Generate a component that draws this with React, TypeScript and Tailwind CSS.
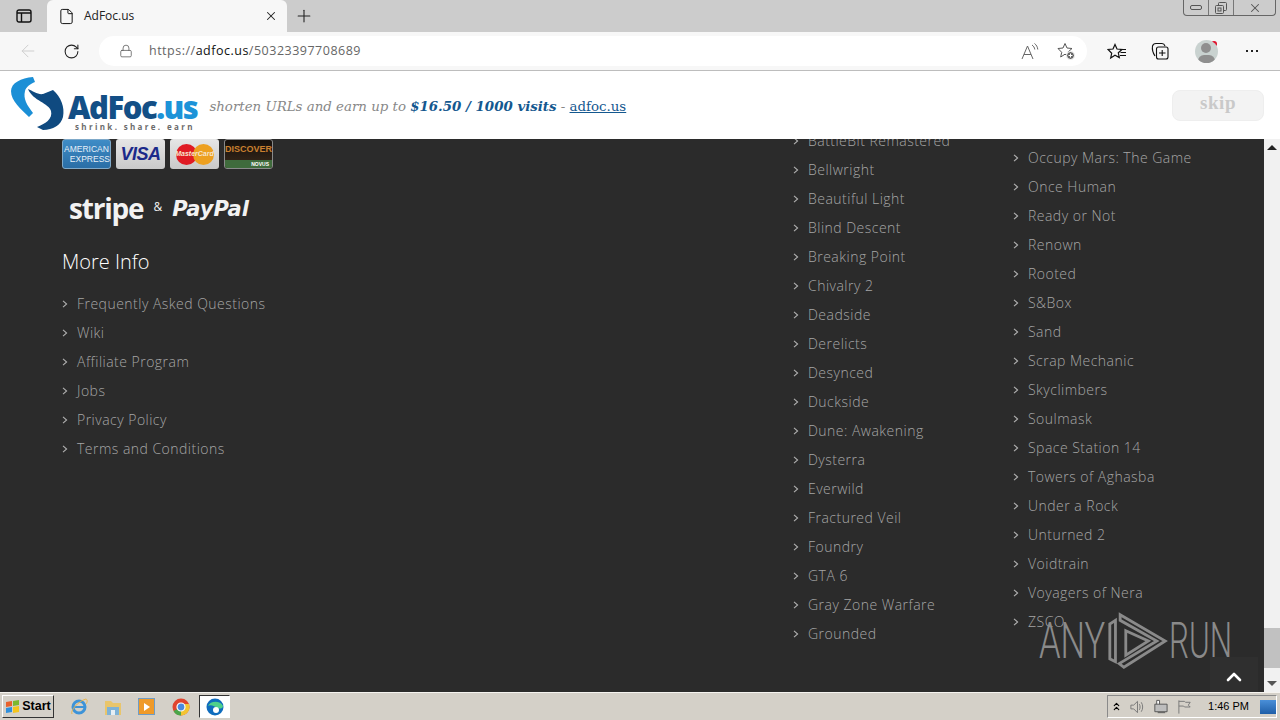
import { ChevronUp, RotateCw, ArrowLeft, Plus, X, Lock, File } from "lucide-react"

const moreInfo = ["Frequently Asked Questions", "Wiki", "Affiliate Program", "Jobs", "Privacy Policy", "Terms and Conditions"]

const gamesA = ["BattleBit Remastered", "Bellwright", "Beautiful Light", "Blind Descent", "Breaking Point", "Chivalry 2", "Deadside", "Derelicts", "Desynced", "Duckside", "Dune: Awakening", "Dysterra", "Everwild", "Fractured Veil", "Foundry", "GTA 6", "Gray Zone Warfare", "Grounded"]

const gamesB = ["Occupy Mars: The Game", "Once Human", "Ready or Not", "Renown", "Rooted", "S&Box", "Sand", "Scrap Mechanic", "Skyclimbers", "Soulmask", "Space Station 14", "Towers of Aghasba", "Under a Rock", "Unturned 2", "Voidtrain", "Voyagers of Nera", "ZSCO"]

function LinkRow({ label }: { label: string }) {
  return (
    <li className="flex h-[29px] items-center text-[14px] font-light tracking-[0.48px] text-[#a6a6a6]">
      <svg width="6" height="8" viewBox="0 0 6 8" fill="none" stroke="#b0b0b0" strokeWidth="1.1" className="mr-[9px] shrink-0">
        <path d="M1 .8L4.6 4 1 7.2" />
      </svg>
      <span className="whitespace-nowrap">{label}</span>
    </li>
  )
}

function TabBar() {
  return (
    <div className="flex h-[32px] shrink-0 bg-[#cccccc]">
      <div className="flex w-[47px] items-center justify-center">
        <svg width="16" height="14" viewBox="0 0 16 14" fill="none" stroke="#111" strokeWidth="1.4">
          <rect x="1" y="1" width="14" height="12" rx="2" />
          <path d="M1 4h14M5.5 4v9" />
        </svg>
      </div>
      <div className="flex w-[240px] items-center rounded-t-[6px] bg-[#f7f7f7] pl-[11px] pr-[9px]">
        <File size={17} strokeWidth={1.4} className="text-[#111]" />
        <span className="ml-[9px] flex-1 font-['Open_Sans',sans-serif] text-[12px] text-[#222]">AdFoc.us</span>
        <X size={14} strokeWidth={1.8} className="text-[#222]" />
      </div>
      <div className="ml-[7px] flex items-center">
        <Plus size={20} strokeWidth={1.3} className="text-[#222]" />
      </div>
      <div className="flex-1" />
      <div className="mr-[4px] flex h-[16px] w-[93px] rounded-b-[4px] border border-t-0 border-[#666]">
        <div className="flex w-[25px] items-center justify-center border-r border-[#777]">
          <div className="h-[5px] w-[12px] rounded-[2px] border border-[#555]" />
        </div>
        <div className="flex w-[25px] items-center justify-center border-r border-[#777]">
          <svg width="12" height="12" viewBox="0 0 12 12" fill="none" stroke="#555">
            <rect x="3.5" y=".5" width="8" height="8" rx="1" />
            <rect x=".5" y="3.5" width="8" height="8" rx="1" fill="#ccc" />
            <rect x="3" y="6" width="3" height="3" />
          </svg>
        </div>
        <div className="flex flex-1 items-center justify-center">
          <X size={14} strokeWidth={1.8} className="text-[#555]" />
        </div>
      </div>
    </div>
  )
}

function Toolbar() {
  return (
    <div className="flex h-[39px] shrink-0 items-center border-b border-[#bdbdbd] bg-[#f7f7f7]">
      <ArrowLeft size={20} strokeWidth={1.2} className="ml-[18px] text-[#cfcfcf]" />
      <RotateCw size={17} strokeWidth={1.5} className="ml-[25px] text-[#222]" />
      <div className="ml-[19px] flex h-[30px] w-[988px] items-center rounded-full bg-white pl-[20px] pr-[12px]">
        <Lock size={14} strokeWidth={1.3} className="text-[#555]" />
        <span className="ml-[16px] flex-1 font-['Open_Sans',sans-serif] text-[12.5px] tracking-[0.5px] text-[#666]">
          https://<span className="text-[#111]">adfoc.us</span>/50323397708689
        </span>
        <svg width="18" height="17" viewBox="0 0 18 17" fill="none" stroke="#666" strokeWidth="1" className="mr-[18px]">
          <path d="M1 16L6.5 3 12 16M3 11.5h7" />
          <path d="M11 2c1.5 1 2.5 2.500 2.800 4.500M13.500 .5c2 1.500 3 3.500 3.300 6" />
        </svg>
        <svg width="18" height="18" viewBox="0 0 18 18" fill="none" stroke="#555" strokeWidth="1">
          <path d="M8 1.500l2 4.500 5 .5-3.700 3.300 1 4.700L8 12.200l-4.300 2.800 1-4.700L1 6.500l5-.5z" />
          <circle cx="13.500" cy="13.500" r="4" fill="#666" stroke="#fff" />
          <path d="M13.500 11.500v4M11.500 13.500h4" stroke="#fff" />
        </svg>
      </div>
      <svg width="20" height="17" viewBox="0 0 20 17" fill="none" stroke="#111" strokeWidth="1.2" className="ml-[20px]">
        <path d="M8 1.500l2 4.500 5 .5-3.700 3.300 1 4.700L8 12.200l-4.300 2.800 1-4.700L1 6.500l5-.5z" />
        <path d="M13 6.500h6M13.500 9.500h5.500M13 12.500h6" />
      </svg>
      <svg width="18" height="18" viewBox="0 0 18 18" fill="none" stroke="#111" strokeWidth="1.1" className="ml-[24px]">
        <path d="M4 14C2 11 1 7 1.500 4 2 2 3 1.500 5 1.500h6c1.500 0 2.500 1 3 2.500" />
        <rect x="5.500" y="5" width="11.500" height="12" rx="2" />
        <path d="M11.200 8v6M8 11h6.500" />
      </svg>
      <div className="relative ml-[26px] h-[23px] w-[23px] overflow-hidden rounded-full bg-[#c9d2d0]">
        <div className="absolute left-[6px] top-[3px] h-[10px] w-[10px] rounded-full bg-[#8f8f8f]" />
        <div className="absolute left-[3px] top-[15px] h-[12px] w-[17px] rounded-full bg-[#8f8f8f]" />
      </div>
      <div className="ml-[-7px] mt-[-14px] h-[6px] w-[6px] rounded-full bg-[#e0102a]" />
      <div className="ml-[29px] flex gap-[3px]">
        <div className="h-[2px] w-[2px] bg-[#222]" />
        <div className="h-[2px] w-[2px] bg-[#222]" />
        <div className="h-[2px] w-[2px] bg-[#222]" />
      </div>
    </div>
  )
}

function Logo() {
  return (
    <div className="flex items-start self-start">
      <svg width="56" height="56" viewBox="0 0 56 56" className="mt-[6px] shrink-0">
        <path d="M22 0C10 1 0 6 0 14c0 10 10 18 18 26l4-4C16 28 12 22 14 14c1-4 5-7 10-9z" fill="#1b8fd6" />
        <path d="M17 12c5 2 10 6 15 5l10-4c8 7 12 17 10 27-2 8-10 13-20 13l-6-3c8-3 16-8 14-16-2-8-18-10-23-22z" fill="#0f4a80" />
      </svg>
      <div className="ml-[1px] mt-[21px] flex flex-col leading-none">
        <span className="font-['Open_Sans',sans-serif] text-[31px] font-extrabold leading-[30px] tracking-[-1.5px] text-[#134f86]">
          AdFoc<span className="text-[#1c93d8]">.us</span>
        </span>
        <span className="ml-[7px] font-['Open_Sans',sans-serif] text-[8px] font-bold leading-[9px] tracking-[2.35px] text-[#6b6b6b]">shrink. share. earn</span>
      </div>
    </div>
  )
}

function Banner() {
  return (
    <div className="flex h-[68px] shrink-0 items-center bg-white pl-[11px] pr-[16px]">
      <Logo />
      <div className="ml-[12px] mt-[3px] flex-1 whitespace-nowrap font-['DejaVu_Serif',serif] text-[13.370px] italic text-[#888]">
        shorten URLs and earn up to <span className="font-bold text-[#14588f]">$16.50 / 1000 visits</span> - <span className="not-italic text-[#14588f] underline">adfoc.us</span>
      </div>
      <div className="flex h-[31px] w-[92px] items-center justify-center rounded-[8px] border border-[#eeeeee] bg-[#f3f3f3] pb-[4px] font-['Liberation_Serif',serif] text-[19px] font-bold tracking-[0.6px] text-[#c9c9c9]">
        skip
      </div>
    </div>
  )
}

function Cards() {
  return (
    <div className="flex gap-[5px]">
      <div className="flex h-[30px] w-[49px] flex-col items-center justify-center rounded-[3px] border border-[#7fa9c9] bg-linear-to-b from-[#3f8cc6] to-[#2a6ea6] font-['Liberation_Sans',sans-serif] text-[8.500px] leading-[10px] text-[#e6f0f8]">
        <span>AMERICAN</span>
        <span className="self-end">EXPRESS</span>
      </div>
      <div className="flex h-[30px] w-[49px] items-center justify-center rounded-[3px] bg-linear-to-b from-[#e6e6e6] to-[#c9c9c9] font-['Liberation_Sans',sans-serif] text-[18px] font-bold italic tracking-[-0.5px] text-[#1b2a8a]">VISA</div>
      <div className="relative flex h-[30px] w-[49px] items-center justify-center rounded-[3px] bg-linear-to-b from-[#e6e6e6] to-[#c9c9c9]">
        <div className="h-[21px] w-[21px] rounded-full bg-[#e01b24]" />
        <div className="-ml-[4px] h-[21px] w-[21px] rounded-full bg-[#eda020]" />
        <span className="absolute font-['Liberation_Sans',sans-serif] text-[7px] font-bold italic text-[#f5e6d0]">MasterCard</span>
      </div>
      <div className="flex h-[30px] w-[49px] flex-col overflow-hidden rounded-[3px] border border-[#8a8a8a] bg-linear-to-b from-[#15100c] to-[#3a2a1c] font-['Liberation_Sans',sans-serif]">
        <span className="flex-1 text-center text-[9px] font-bold leading-[19px] text-[#c9802f]">DISCOVER</span>
        <span className="h-[8px] bg-[#3f6b3c] pr-[3px] text-right text-[5px] font-bold leading-[8px] text-white">NOVUS</span>
      </div>
    </div>
  )
}

function Scrollbar() {
  return (
    <div className="flex w-[16px] shrink-0 flex-col items-center bg-[#f1f1f1]">
      <div className="mt-[6px] h-0 w-0 border-x-[5px] border-b-[5px] border-x-transparent border-b-[#222]" />
      <div className="flex-1" />
      <div className="mb-[13px] h-[40px] w-full bg-[#c1c1c1]" />
      <div className="mb-[6px] h-0 w-0 border-x-[5px] border-t-[5px] border-x-transparent border-t-[#555]" />
    </div>
  )
}

function Watermark() {
  return (
    <div className="absolute left-[1039px] top-[471px] flex items-center font-['Roboto',sans-serif] text-[50px] font-light leading-none text-[#8a8a8a]">
      <span className="w-[68px] origin-left scale-x-[0.69] whitespace-nowrap">ANY</span>
      <svg width="62" height="62" viewBox="0 0 66 62" fill="none" stroke="#8a8a8a" strokeWidth="3">
        <path d="M9 9v44l-6-3V13z" />
        <path d="M14 3l48 28-44 28-5-4 40-24L14 9z" />
        <path d="M20 20l24 11-24 15z" />
      </svg>
      <span className="w-[62px] origin-left scale-x-[0.63] whitespace-nowrap">RUN</span>
    </div>
  )
}

function Taskbar() {
  return (
    <div className="flex h-[28px] shrink-0 items-center border-t border-[#f5f3ef] bg-[#d4d0c8]">
      <div className="ml-[2px] flex h-[23px] w-[52px] items-center justify-center gap-[2px] border border-b-[#333] border-l-white border-r-[#333] border-t-white font-['Liberation_Sans',sans-serif] text-[12.500px] font-bold text-black">
        <svg width="15" height="14" viewBox="0 0 15 14">
          <path d="M1 2l6-1v5l-6 1z" fill="#e8612c" />
          <path d="M8 1l6-1v5l-6 1z" fill="#7cb82f" />
          <path d="M1 8l6-1v5l-6 1z" fill="#2f8fdc" />
          <path d="M8 7l6-1v6l-6 1z" fill="#f5c51c" />
        </svg>
        Start
      </div>
      <svg width="18" height="18" viewBox="0 0 18 18" fill="none" className="ml-[16px]">
        <circle cx="9" cy="9" r="6" stroke="#3d93d8" strokeWidth="3" />
        <path d="M4 9h10" stroke="#3d93d8" strokeWidth="2" />
        <path d="M2 16C0 13 8 3 16 1c2 1 1 4 0 5" stroke="#e9b44c" strokeWidth="1" />
      </svg>
      <svg width="18" height="18" viewBox="0 0 18 18" className="ml-[16px]">
        <path d="M1 3h6l2 2h8v12H1z" fill="#e9c56b" />
        <path d="M3 9h12v8H3z" fill="#7fb2d6" />
        <path d="M7 12h4v5H7z" fill="#e6eef4" />
      </svg>
      <div className="ml-[16px] flex h-[17px] w-[17px] items-center justify-center border border-[#6f9cc6] bg-[#ef9a2a]">
        <div className="h-0 w-0 border-y-[4px] border-l-[6px] border-y-transparent border-l-white" />
      </div>
      <svg width="18" height="18" viewBox="0 0 18 18" className="ml-[17px]">
        <circle cx="9" cy="9" r="8.500" fill="#e0452f" />
        <path d="M9 9L1.500 13A8.500 8.500 0 0 0 9 17.500z" fill="#4aa64a" />
        <path d="M9 9v8.500A8.500 8.500 0 0 0 17 6H9z" fill="#f3c431" />
        <circle cx="9" cy="9" r="4" fill="#4a89e0" stroke="#fff" strokeWidth="1.200" />
      </svg>
      <div className="ml-[9px] flex h-[23px] w-[31px] items-center justify-center border border-b-white border-l-[#333] border-r-white border-t-[#333] bg-white">
        <svg width="18" height="18" viewBox="0 0 18 18">
          <circle cx="9" cy="9" r="8.500" fill="#0f6cbd" />
          <path d="M2 8c2-5 12-6 15 0 0 3-4 3-6 2-2-2-7-4-9-2z" fill="#4fd08a" />
          <circle cx="10" cy="12" r="3" fill="#fff" />
        </svg>
      </div>
      <div className="flex-1" />
      <div className="mr-[3px] flex h-[23px] w-[170px] items-center border border-b-white border-l-[#8a8a8a] border-r-white border-t-[#8a8a8a] pl-[4px] font-['Liberation_Sans',sans-serif]">
        <div className="flex w-[9px] flex-col items-center">
          <ChevronUp size={9} strokeWidth={3} className="-mb-[5px] text-black" />
          <ChevronUp size={9} strokeWidth={3} className="text-black" />
        </div>
        <svg width="18" height="16" viewBox="0 0 18 16" fill="none" stroke="#777" className="ml-[8px]">
          <path d="M2 6h3l4-4v12l-4-4H2zM11 5c1 2 1 4 0 6M13 3c2 3 2 7 0 10" />
        </svg>
        <svg width="18" height="16" viewBox="0 0 18 16" className="ml-[6px]">
          <path d="M5 1h3v6H5z" fill="#fff" stroke="#555" />
          <path d="M3 5h13v8H3z" fill="#bdbdbd" stroke="#555" />
          <path d="M6 14h8" stroke="#555" />
        </svg>
        <svg width="16" height="16" viewBox="0 0 16 16" fill="none" stroke="#777" className="ml-[8px]">
          <path d="M2 1v14M2 2h6l1 1h5l-2 3 2 2H8L7 7H2" />
        </svg>
        <span className="ml-[16px] whitespace-nowrap text-[11px] text-black">1:46 PM</span>
        <div className="ml-[11px] h-[14px] w-[17px] bg-linear-to-b from-[#4a8fd8] to-[#1f5fa8]" />
      </div>
    </div>
  )
}

export default function App() {
  return (
    <div className="flex h-[720px] w-[1280px] flex-col overflow-hidden bg-white font-['Open_Sans',sans-serif]">
      <TabBar />
      <Toolbar />
      <Banner />
      <div className="relative flex h-[553px] shrink-0 overflow-hidden">
        <div className="flex flex-1 overflow-hidden bg-[#2b2b2b]">
          <div className="ml-[62px] w-[731px] shrink-0">
            <Cards />
            <div className="mt-[23px] flex items-center pl-[7px] text-[#f2f2f2]">
              <span className="font-['Open_Sans',sans-serif] text-[28px] font-bold leading-[32px] tracking-[-1.2px]">stripe</span>
              <span className="ml-[10px] mt-[-2px] text-[12px]">&amp;</span>
              <span className="ml-[10px] mt-[1px] font-['DejaVu_Sans',sans-serif] text-[21px] font-bold italic leading-[26px]">PayPal</span>
            </div>
            <h3 className="mt-[24px] text-[20px] font-light leading-[28px] text-white">More Info</h3>
            <ul className="mt-[13px]">
              {moreInfo.map((m) => <LinkRow key={m} label={m} />)}
            </ul>
          </div>
          <ul className="mt-[-13px] w-[220px] shrink-0">
            {gamesA.map((g) => <LinkRow key={g} label={g} />)}
          </ul>
          <ul className="mt-[4px]">
            {gamesB.map((g) => <LinkRow key={g} label={g} />)}
          </ul>
        </div>
        <Scrollbar />
        <Watermark />
        <div className="absolute left-[1210px] top-[518px] flex h-[35px] w-[48px] items-center justify-center bg-[#2f2f2f] pt-[5px]">
          <ChevronUp size={24} strokeWidth={2.6} className="text-white" />
        </div>
      </div>
      <Taskbar />
    </div>
  )
}
